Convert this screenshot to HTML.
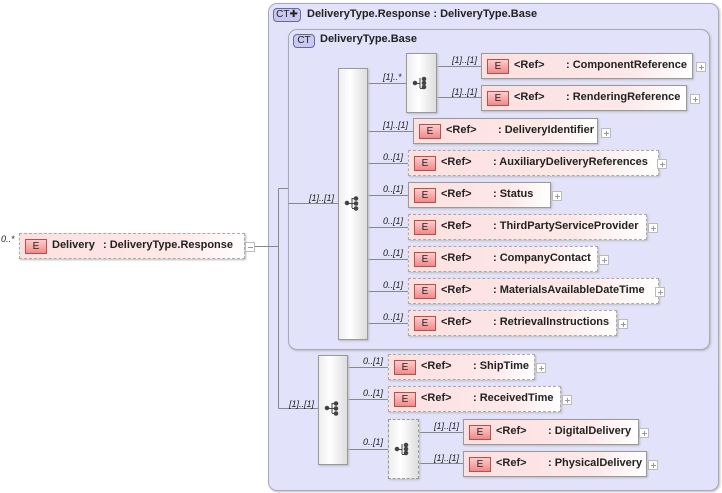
<!DOCTYPE html>
<html><head><style>
body{margin:0;width:722px;height:493px;background:#fff;position:relative;overflow:hidden;font-family:"Liberation Sans",sans-serif;}
.a{position:absolute;}
.ct{position:absolute;border:1px solid #a8a8b8;border-radius:9px;background:#e2e2fa;box-shadow:1px 1px 2px #bbb;}
.el{position:absolute;height:24px;border:1px solid #9a9a9a;background:linear-gradient(to right,#fde0e0,#fde8e8 70%,#fff);box-shadow:1px 1px 2px #bbb;font-size:11px;font-weight:bold;color:#222;}
.el.d{border:1px dashed #aaa;}
.el .e{position:absolute;left:5px;top:5px;width:20px;height:13px;border:1px solid #b05050;background:linear-gradient(#fcc,#f08a8a);font-size:10px;font-weight:normal;text-align:center;line-height:13px;color:#222;}
.el .r{position:absolute;left:32px;top:5px;}
.el .n{position:absolute;top:5px;white-space:nowrap;}
.pl{position:absolute;width:8px;height:8px;border:1px solid #bbb;background:#fff;}
.pl:before{content:"";position:absolute;left:2px;top:4px;width:5px;height:1px;background:#999;}
.pl.p:after{content:"";position:absolute;left:4px;top:2px;width:1px;height:5px;background:#999;}
.seq{position:absolute;border:1px solid #999;background:linear-gradient(to right,#eee,#fff 40%,#ddd);box-shadow:1px 1px 2px #bbb;}
.lb{position:absolute;font-size:9px;font-style:italic;color:#222;}
.h{position:absolute;font-size:11px;font-weight:bold;color:#222;}
.ic{position:absolute;border:1px solid #6668a0;border-radius:4px;background:#c8c8f0;font-size:10px;color:#222;text-align:center;line-height:11px;}
</style></head><body>
<div class="ct" style="left:268px;top:3px;width:449px;height:486px"></div>
<div class="ic" style="left:273px;top:8px;width:26px;height:12px">CT✚</div>
<div class="h" style="left:307px;top:8px">DeliveryType.Response : DeliveryType.Base</div>
<div class="ct" style="left:288px;top:29px;width:420px;height:319px"></div>
<div class="ic" style="left:293px;top:34px;width:20px;height:12px">CT</div>
<div class="h" style="left:320px;top:33px">DeliveryType.Base</div>

<svg class="a" style="left:0;top:0" width="722" height="493">
<g stroke="#888" fill="none" stroke-width="1">
<path d="M254.5 246.5H278.5M278.5 188.5V408.5M278.5 188.5H288M288.5 203.5H338M278.5 408.5H318"/>
<path d="M367 83.5H406M436 66.5H481M436 97.5H481"/>
<path d="M367 131.5H413M367 163.5H408M367 195.5H408M367 227.5H408M367 259.5H408M367 291.5H408M367 323.5H408"/>
<path d="M347 367.5H388M347 399.5H388M347 449.5H388M418 432.5H463M418 463.5H463"/>
</g>
<g fill="#444" stroke="#444">
<g transform="translate(345,196)"><circle cx="2" cy="7" r="1.8"/><path d="M3 7.5H7M7 2V12M7 2.5H10M7 7.5H10M7 12.5H10" fill="none"/><circle cx="11" cy="2" r="1.8"/><circle cx="11" cy="5" r="1.8"/><circle cx="11" cy="9" r="1.8"/><circle cx="11" cy="12" r="1.8"/></g>
<g transform="translate(325,401)"><circle cx="2" cy="7" r="1.8"/><path d="M3 7.5H7M7 2V12M7 2.5H10M7 7.5H10M7 12.5H10" fill="none"/><circle cx="11" cy="2" r="1.8"/><circle cx="11" cy="5" r="1.8"/><circle cx="11" cy="9" r="1.8"/><circle cx="11" cy="12" r="1.8"/></g>
<g transform="translate(414,76)"><circle cx="2" cy="7" r="1.8"/><path d="M3 7.5H7M7 12.5H10M7 3V12" fill="none"/><circle cx="11" cy="3" r="1.8"/><circle cx="11" cy="7" r="1.8"/><circle cx="11" cy="11" r="1.8"/></g>
<g transform="translate(396,442)"><circle cx="2" cy="7" r="1.8"/><path d="M3 7.5H7M7 12.5H10M7 3V12" fill="none"/><circle cx="11" cy="3" r="1.8"/><circle cx="11" cy="7" r="1.8"/><circle cx="11" cy="11" r="1.8"/></g>
</g>
</svg>
<div class="seq" style="left:338px;top:68px;width:28px;height:270px"></div>
<div class="seq" style="left:318px;top:355px;width:28px;height:108px"></div>
<div class="seq" style="left:406px;top:53px;width:29px;height:58px"></div>
<div class="seq" style="left:388px;top:419px;width:29px;height:58px;border-style:dashed"></div>
<svg class="a" style="left:0;top:0" width="722" height="493">
<g fill="#444" stroke="#444">
<g transform="translate(345,196)"><circle cx="2" cy="7" r="1.8"/><path d="M3 7.5H7M7 2V12M7 2.5H10M7 7.5H10M7 12.5H10" fill="none"/><circle cx="11" cy="2.5" r="1.8"/><circle cx="11" cy="7.5" r="1.8"/><circle cx="11" cy="12.5" r="1.8"/></g>
<g transform="translate(325,401)"><circle cx="2" cy="7" r="1.8"/><path d="M3 7.5H7M7 2V12M7 2.5H10M7 7.5H10M7 12.5H10" fill="none"/><circle cx="11" cy="2.5" r="1.8"/><circle cx="11" cy="7.5" r="1.8"/><circle cx="11" cy="12.5" r="1.8"/></g>
<g transform="translate(413,76)"><circle cx="2" cy="7" r="1.8"/><path d="M3 7.5H7M7 12.5H10M7 2V12" fill="none"/><circle cx="11" cy="3" r="1.8"/><circle cx="11" cy="7" r="1.8"/><circle cx="11" cy="11" r="1.8"/></g>
<g transform="translate(395,442)"><circle cx="2" cy="7" r="1.8"/><path d="M3 7.5H7M7 12.5H10M7 2V12" fill="none"/><circle cx="11" cy="3" r="1.8"/><circle cx="11" cy="7" r="1.8"/><circle cx="11" cy="11" r="1.8"/></g>
</g></svg>

<div class="lb" style="left:1px;top:234px">0..*</div>
<div class="el d" style="left:19px;top:233px;width:224px"><div class="e">E</div><div class="n" style="left:32px">Delivery</div><div class="n" style="left:83px">: DeliveryType.Response</div></div>
<div class="pl" style="left:245px;top:242px"></div>

<div class="lb" style="left:309px;top:193px">[1]..[1]</div>
<div class="lb" style="left:289px;top:399px">[1]..[1]</div>
<div class="lb" style="left:383px;top:72px">[1]..*</div>

<div class="lb" style="left:452px;top:55px">[1]..[1]</div>
<div class="el" style="left:481px;top:53px;width:210px"><div class="e">E</div><div class="r">&lt;Ref&gt;</div><div class="n" style="left:84px">: ComponentReference</div></div>
<div class="pl p" style="left:696px;top:62px"></div>
<div class="lb" style="left:452px;top:87px">[1]..[1]</div>
<div class="el" style="left:481px;top:85px;width:204px"><div class="e">E</div><div class="r">&lt;Ref&gt;</div><div class="n" style="left:84px">: RenderingReference</div></div>
<div class="pl p" style="left:690px;top:94px"></div>

<div class="lb" style="left:383px;top:120px">[1]..[1]</div>
<div class="el" style="left:413px;top:118px;width:183px"><div class="e">E</div><div class="r">&lt;Ref&gt;</div><div class="n" style="left:84px">: DeliveryIdentifier</div></div>
<div class="pl p" style="left:601px;top:128px"></div>

<div class="lb" style="left:383px;top:152px">0..[1]</div>
<div class="el d" style="left:408px;top:150px;width:249px"><div class="e">E</div><div class="r">&lt;Ref&gt;</div><div class="n" style="left:84px">: AuxiliaryDeliveryReferences</div></div>
<div class="pl p" style="left:657px;top:159px"></div>
<div class="lb" style="left:383px;top:184px">0..[1]</div>
<div class="el" style="left:408px;top:182px;width:141px"><div class="e">E</div><div class="r">&lt;Ref&gt;</div><div class="n" style="left:84px">: Status</div></div>
<div class="pl p" style="left:552px;top:191px"></div>
<div class="lb" style="left:383px;top:216px">0..[1]</div>
<div class="el d" style="left:408px;top:214px;width:237px"><div class="e">E</div><div class="r">&lt;Ref&gt;</div><div class="n" style="left:84px">: ThirdPartyServiceProvider</div></div>
<div class="pl p" style="left:648px;top:223px"></div>
<div class="lb" style="left:383px;top:248px">0..[1]</div>
<div class="el d" style="left:408px;top:246px;width:188px"><div class="e">E</div><div class="r">&lt;Ref&gt;</div><div class="n" style="left:84px">: CompanyContact</div></div>
<div class="pl p" style="left:599px;top:255px"></div>
<div class="lb" style="left:383px;top:280px">0..[1]</div>
<div class="el d" style="left:408px;top:278px;width:249px"><div class="e">E</div><div class="r">&lt;Ref&gt;</div><div class="n" style="left:84px">: MaterialsAvailableDateTime</div></div>
<div class="pl p" style="left:655px;top:287px"></div>
<div class="lb" style="left:383px;top:312px">0..[1]</div>
<div class="el d" style="left:408px;top:310px;width:207px"><div class="e">E</div><div class="r">&lt;Ref&gt;</div><div class="n" style="left:84px">: RetrievalInstructions</div></div>
<div class="pl p" style="left:618px;top:319px"></div>

<div class="lb" style="left:363px;top:356px">0..[1]</div>
<div class="el d" style="left:388px;top:354px;width:145px"><div class="e">E</div><div class="r">&lt;Ref&gt;</div><div class="n" style="left:84px">: ShipTime</div></div>
<div class="pl p" style="left:536px;top:363px"></div>
<div class="lb" style="left:363px;top:388px">0..[1]</div>
<div class="el d" style="left:388px;top:386px;width:171px"><div class="e">E</div><div class="r">&lt;Ref&gt;</div><div class="n" style="left:84px">: ReceivedTime</div></div>
<div class="pl p" style="left:562px;top:395px"></div>
<div class="lb" style="left:363px;top:437px">0..[1]</div>
<div class="lb" style="left:434px;top:421px">[1]..[1]</div>
<div class="el" style="left:463px;top:419px;width:174px"><div class="e">E</div><div class="r">&lt;Ref&gt;</div><div class="n" style="left:84px">: DigitalDelivery</div></div>
<div class="pl p" style="left:639px;top:428px"></div>
<div class="lb" style="left:434px;top:453px">[1]..[1]</div>
<div class="el" style="left:463px;top:451px;width:182px"><div class="e">E</div><div class="r">&lt;Ref&gt;</div><div class="n" style="left:84px">: PhysicalDelivery</div></div>
<div class="pl p" style="left:648px;top:460px"></div>
</body></html>
